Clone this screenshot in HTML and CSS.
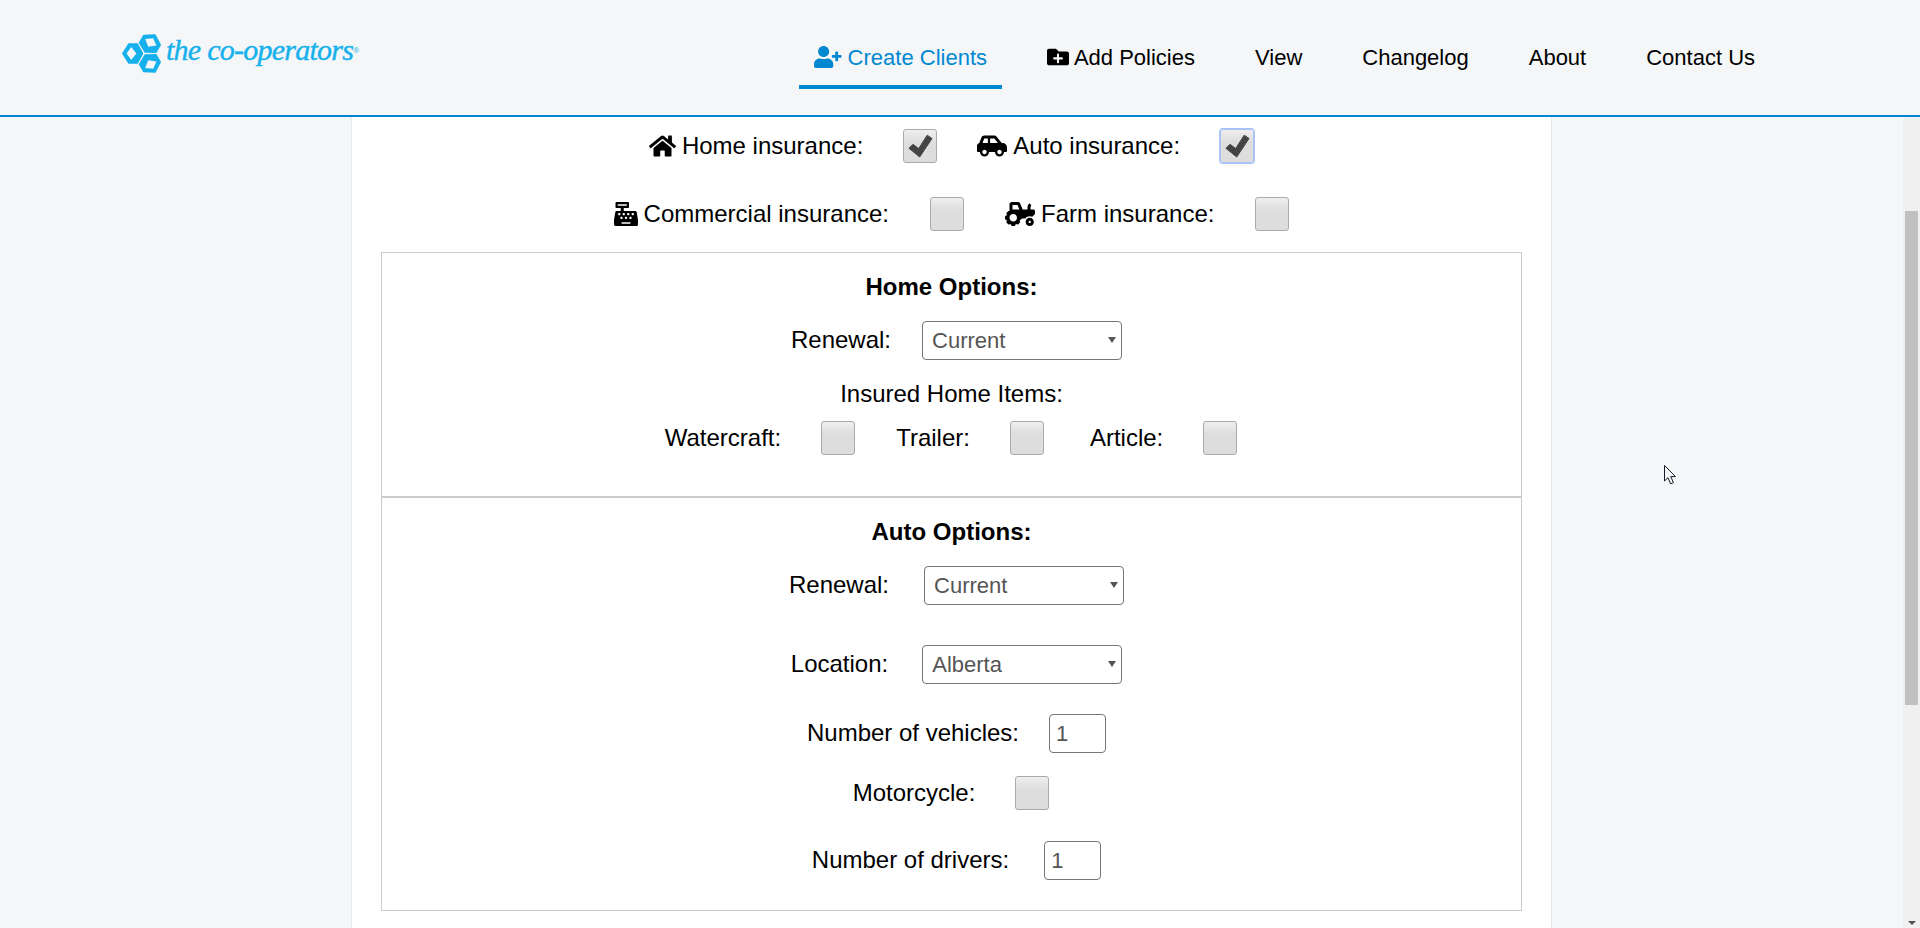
FILE: index.html
```html
<html>
    <head>
        <title>Create Clients</title>
        <meta name="viewport" content="width=device-width, initial-scale=1">
        <link rel="stylesheet" href="styles.css">
    </head>
    <body>
        <header class="topbar">
            <a class="logo" href="#">
                <svg class="logo-mark" viewBox="-25 -22 44 44">
                    <g>
                        <path class="lobe" d="M-24 0L-17 -11H-7L-1 0L-7 11H-17Z"/>
                        <path class="lobe-hole" d="M-19 0L-14 -7L-8.5 0L-14 7Z"/>
                    </g>
                    <g transform="rotate(120)">
                        <path class="lobe" d="M-24 0L-17 -11H-7L-1 0L-7 11H-17Z"/>
                        <path class="lobe-hole" d="M-19 0L-14 -7L-8.5 0L-14 7Z"/>
                    </g>
                    <g transform="rotate(240)">
                        <path class="lobe" d="M-24 0L-17 -11H-7L-1 0L-7 11H-17Z"/>
                        <path class="lobe-hole" d="M-19 0L-14 -7L-8.5 0L-14 7Z"/>
                    </g>
                </svg>
                <span class="logo-text">the co-operators</span><span class="logo-reg">®</span>
            </a>
            <nav class="nav">
                <a class="nav-link active" href="#">
                    <svg class="nav-icon" viewBox="0 0 640 512"><path d="M624 208h-64v-64c0-8.8-7.2-16-16-16h-32c-8.8 0-16 7.2-16 16v64h-64c-8.8 0-16 7.2-16 16v32c0 8.8 7.2 16 16 16h64v64c0 8.8 7.2 16 16 16h32c8.8 0 16-7.2 16-16v-64h64c8.8 0 16-7.2 16-16v-32c0-8.8-7.2-16-16-16zm-400 48c70.7 0 128-57.3 128-128S294.7 0 224 0 96 57.3 96 128s57.3 128 128 128zm89.6 32h-16.7c-22.2 10.2-46.9 16-72.9 16s-50.6-5.8-72.9-16h-16.7C60.2 288 0 348.2 0 422.4V464c0 26.5 21.5 48 48 48h352c26.5 0 48-21.5 48-48v-41.6c0-74.2-60.2-134.4-134.4-134.4z"/></svg>
                    Create Clients
                </a>
                <a class="nav-link" href="#">
                    <svg class="nav-icon" viewBox="0 0 512 512"><path d="M464 128H272l-64-64H48C21.49 64 0 85.49 0 112v288c0 26.51 21.49 48 48 48h416c26.51 0 48-21.49 48-48V176c0-26.51-21.49-48-48-48zm-96 168c0 8.84-7.16 16-16 16h-72v72c0 8.84-7.16 16-16 16h-16c-8.84 0-16-7.16-16-16v-72h-72c-8.84 0-16-7.16-16-16v-16c0-8.84 7.16-16 16-16h72v-72c0-8.84 7.16-16 16-16h16c8.84 0 16 7.16 16 16v72h72c8.84 0 16 7.16 16 16v16z"/></svg>
                    Add Policies
                </a>
                <a class="nav-link" href="#">View</a>
                <a class="nav-link" href="#">Changelog</a>
                <a class="nav-link" href="#">About</a>
                <a class="nav-link" href="#">Contact Us</a>
            </nav>
        </header>

        <main class="page">
            <div class="content">
                <div class="row types-row">
                    <span class="type-label">
                        <svg class="type-icon" viewBox="0 0 576 512"><path d="M280.37 148.26L96 300.11V464a16 16 0 0 0 16 16l112.06-.29a16 16 0 0 0 15.92-16V368a16 16 0 0 1 16-16h64a16 16 0 0 1 16 16v95.64a16 16 0 0 0 16 16.05L464 480a16 16 0 0 0 16-16V300L295.67 148.26a12.19 12.19 0 0 0-15.3 0zM571.6 251.47L488 182.56V44.05a12 12 0 0 0-12-12h-56a12 12 0 0 0-12 12v72.61L318.47 43a48 48 0 0 0-61 0L4.34 251.47a12 12 0 0 0-1.6 16.9l25.5 31A12 12 0 0 0 45.15 301l235.22-193.74a12.19 12.19 0 0 1 15.3 0L530.9 301a12 12 0 0 0 16.9-1.6l25.5-31a12 12 0 0 0-1.7-16.93z"/></svg>
                        Home insurance:
                    </span>
                    <span class="check">
                        <svg viewBox="0 0 25 24"><path d="M1 14.3L5 10.3L10.7 14.6L19.2 1.2L24 4.5L11.7 23Z"/></svg>
                    </span>
                    <span class="type-label">
                        <svg class="type-icon" viewBox="0 0 640 512"><path d="M544 192h-16L419.22 56.02A64.025 64.025 0 0 0 369.24 32H155.33c-26.17 0-49.7 15.93-59.42 40.23L48 194.26C20.44 201.4 0 226.21 0 256v112c0 8.84 7.16 16 16 16h48c0 53.02 42.98 96 96 96s96-42.98 96-96h128c0 53.02 42.98 96 96 96s96-42.98 96-96h48c8.84 0 16-7.16 16-16v-80c0-53.02-42.98-96-96-96zM160 432c-26.47 0-48-21.53-48-48s21.53-48 48-48 48 21.53 48 48-21.53 48-48 48zm72-240H116.93l38.4-96H232v96zm48 0V96h89.24l76.8 96H280zm200 240c-26.47 0-48-21.53-48-48s21.53-48 48-48 48 21.53 48 48-21.53 48-48 48z"/></svg>
                        Auto insurance:
                    </span>
                    <span class="check focused">
                        <svg viewBox="0 0 25 24"><path d="M1 14.3L5 10.3L10.7 14.6L19.2 1.2L24 4.5L11.7 23Z"/></svg>
                    </span>
                </div>
                <div class="row types-row second">
                    <span class="type-label">
                        <svg class="type-icon" viewBox="0 0 512 512"><path d="M511.1 378.8l-26.7-160c-2.6-15.4-15.9-26.7-31.6-26.7H208v-64h96c8.8 0 16-7.2 16-16V16c0-8.8-7.2-16-16-16H48c-8.8 0-16 7.2-16 16v96c0 8.8 7.2 16 16 16h96v64H59.1c-15.6 0-29 11.3-31.6 26.7L.8 378.7c-.6 3.5-.9 7-.9 10.5V480c0 17.7 14.3 32 32 32h448c17.7 0 32-14.3 32-32v-90.7c.1-3.5-.2-7-.8-10.5zM280 248c0-8.8 7.2-16 16-16h16c8.8 0 16 7.2 16 16v16c0 8.8-7.2 16-16 16h-16c-8.8 0-16-7.2-16-16v-16zm-32 64h16c8.8 0 16 7.2 16 16v16c0 8.8-7.2 16-16 16h-16c-8.8 0-16-7.2-16-16v-16c0-8.8 7.2-16 16-16zm-32-80c8.8 0 16 7.2 16 16v16c0 8.8-7.2 16-16 16h-16c-8.8 0-16-7.2-16-16v-16c0-8.8 7.2-16 16-16h16zM80 80V48h192v32H80zm40 200h-16c-8.8 0-16-7.2-16-16v-16c0-8.8 7.2-16 16-16h16c8.8 0 16 7.2 16 16v16c0 8.8-7.2 16-16 16zm16 64v-16c0-8.8 7.2-16 16-16h16c8.8 0 16 7.2 16 16v16c0 8.8-7.2 16-16 16h-16c-8.8 0-16-7.2-16-16zm216 112c0 4.4-3.6 8-8 8H168c-4.4 0-8-3.6-8-8v-16c0-4.4 3.6-8 8-8h176c4.4 0 8 3.6 8 8v16zm24-112c0 8.8-7.2 16-16 16h-16c-8.8 0-16-7.2-16-16v-16c0-8.8 7.2-16 16-16h16c8.8 0 16 7.2 16 16v16zm48-80c0 8.8-7.2 16-16 16h-16c-8.8 0-16-7.2-16-16v-16c0-8.8 7.2-16 16-16h16c8.8 0 16 7.2 16 16v16z"/></svg>
                        Commercial insurance:
                    </span>
                    <span class="check"></span>
                    <span class="type-label">
                        <svg class="type-icon" viewBox="0 0 640 512"><path d="M528 336c-48.6 0-88 39.4-88 88s39.4 88 88 88 88-39.4 88-88-39.4-88-88-88zm0 112c-13.23 0-24-10.77-24-24s10.77-24 24-24 24 10.77 24 24-10.77 24-24 24zm80-288h-64v-40.2c0-14.12 4.7-27.76 13.15-38.84 4.42-5.8 3.55-14.06-1.32-19.49L534.2 37.3c-6.66-7.45-18.32-6.92-24.7.78C490.58 60.9 480 89.81 480 119.8V160H377.67L321.58 29.14A47.914 47.914 0 0 0 277.45 0H144c-26.47 0-48 21.53-48 48v146.52c-8.63-6.73-20.96-6.46-28.89 1.47L36 227.1c-8.59 8.59-8.59 22.52 0 31.11l5.06 5.06c-4.99 9.26-8.96 18.82-11.91 28.72H22c-12.15 0-22 9.85-22 22v44c0 12.15 9.85 22 22 22h7.14c2.96 9.91 6.92 19.46 11.91 28.73l-5.06 5.06c-8.59 8.59-8.59 22.52 0 31.11L67.1 476c8.59 8.59 22.52 8.59 31.11 0l5.06-5.06c9.26 4.99 18.82 8.96 28.72 11.91V490c0 12.15 9.85 22 22 22h44c12.15 0 22-9.85 22-22v-7.14c9.9-2.95 19.46-6.92 28.72-11.91l5.06 5.06c8.59 8.59 22.52 8.59 31.11 0l31.11-31.11c8.59-8.59 8.59-22.52 0-31.11l-5.06-5.06c4.99-9.26 8.96-18.82 11.91-28.72H330c12.15 0 22-9.85 22-22v-6h80.54c21.91-28.99 56.32-48 95.46-48 18.64 0 36.07 4.61 51.8 12.2l50.82-50.82c6-6 9.37-14.14 9.37-22.63V192c.01-17.67-14.32-32-31.99-32zM176 416c-44.18 0-80-35.82-80-80s35.82-80 80-80 80 35.82 80 80-35.82 80-80 80zm22-256h-38V64h106.89l41.15 96H198z"/></svg>
                        Farm insurance:
                    </span>
                    <span class="check"></span>
                </div>

                <section class="options home-options">
                    <h4 class="options-title">Home Options:</h4>
                    <div class="row field-row first-field">
                        <label class="gap-31">Renewal:</label>
                        <span class="select-wrap"><select class="select"><option>Current</option></select></span>
                    </div>
                    <div class="items-title">Insured Home Items:</div>
                    <div class="row items-row">
                        <label class="gap-40">Watercraft:</label>
                        <span class="check"></span>
                        <label class="item-next gap-40">Trailer:</label>
                        <span class="check"></span>
                        <label class="item-last gap-40">Article:</label>
                        <span class="check"></span>
                    </div>
                </section>

                <section class="options auto-options">
                    <h4 class="options-title">Auto Options:</h4>
                    <div class="row field-row first-field">
                        <label class="gap-35">Renewal:</label>
                        <span class="select-wrap"><select class="select"><option>Current</option></select></span>
                    </div>
                    <div class="row field-row location-field">
                        <label class="gap-34">Location:</label>
                        <span class="select-wrap"><select class="select"><option>Alberta</option></select></span>
                    </div>
                    <div class="row field-row vehicles-field">
                        <label class="gap-30">Number of vehicles:</label>
                        <input class="number vehicles" type="number" value="1">
                    </div>
                    <div class="row motorcycle-field">
                        <label class="gap-40">Motorcycle:</label>
                        <span class="check"></span>
                    </div>
                    <div class="row field-row drivers-field">
                        <label class="gap-35">Number of drivers:</label>
                        <input class="number" type="number" value="1">
                    </div>
                </section>
            </div>
        </main>

        <!-- painted scrollbar and mouse pointer from the capture -->
        <div class="scrollbar">
            <div class="scroll-thumb"></div>
            <div class="scroll-arrow"></div>
        </div>
        <svg class="pointer" viewBox="0 0 12 20"><path d="M.5.5V16L4 12.7 6.6 18.8 9.4 17.6 6.8 11.6H11.5Z"/></svg>
    </body>
</html>
```

FILE: styles.css
```css
body {
    background: #f4f6f8;
    font-family: "Liberation Sans", Arial, sans-serif;
    margin: 0;
    padding: 0;
    height: 928px;
    overflow: hidden;
    color: #000;
    font-size: 24px;
}

.topbar {
    height: 115px;
    border-bottom: 2px solid #0288d1;
    display: flex;
    background: #f4f6f8;
}

.logo {
    display: flex;
    align-items: flex-start;
    width: 799px;
    padding: 32px 0 0 121px;
    box-sizing: border-box;
    text-decoration: none;
    color: #16b1ec;
}

.logo-mark {
    width: 41px;
    height: 43px;
    flex: none;
}

.lobe {
    fill: #16b1ec;
}

.lobe-hole {
    fill: #f4f6f8;
}

.logo-text {
    font-family: "Liberation Serif", "Times New Roman", serif;
    font-style: italic;
    font-size: 30px;
    line-height: 34px;
    margin: 1px 0 0 4px;
    letter-spacing: -0.75px;
    -webkit-text-stroke: 0.4px #16b1ec;
    white-space: nowrap;
}

.logo-reg {
    font-size: 8px;
    line-height: 10px;
    margin-top: 14px;
}

.nav {
    display: flex;
    gap: 30px;
    align-items: flex-start;
    padding-top: 25px;
}

.nav-link {
    display: block;
    padding: 17px 15px 11px;
    line-height: 32px;
    font-size: 22px;
    color: #000;
    text-decoration: none;
    border-bottom: 4px solid transparent;
    white-space: nowrap;
}

.nav-link.active {
    color: #0288d1;
    border-bottom-color: #0288d1;
}

.nav-icon {
    height: 22px;
    fill: currentColor;
    vertical-align: -3px;
}

.page {
    display: flex;
    justify-content: center;
    padding-right: 17px;
}

.content {
    width: 1201px;
    height: 811px;
    box-sizing: border-box;
    background: #fff;
    border-left: 1px solid #e6e8ea;
    border-right: 1px solid #e6e8ea;
    padding: 12px 29px 0;
}

.row {
    display: flex;
    justify-content: center;
    align-items: center;
}

.types-row {
    gap: 40px;
}

.types-row.second {
    gap: 41px;
    margin-top: 34px;
}

.type-label {
    display: flex;
    align-items: center;
    gap: 6px;
    line-height: 34px;
    white-space: nowrap;
}

.type-icon {
    height: 24px;
    fill: #000;
}

.check {
    width: 32px;
    height: 32px;
    flex: none;
    display: flex;
    align-items: center;
    justify-content: center;
    border: 1px solid #aaa;
    border-radius: 3px;
    background: linear-gradient(#efefef, #dddddd 40%);
}

.check svg {
    width: 25px;
    height: 24px;
    fill: #444;
    stroke: #444;
    stroke-width: 1;
    stroke-linejoin: round;
}

.check.focused {
    border-color: #a9c3f4;
    box-shadow: 0 0 0 1px #a9c3f4;
}

.options {
    border: 1px solid #ccc;
}

.home-options {
    margin-top: 21px;
    height: 245px;
    box-sizing: border-box;
}

.auto-options {
    height: 414px;
    box-sizing: border-box;
}

.options-title {
    margin: 19px 0 0;
    font-size: 24px;
    line-height: 30px;
    font-weight: bold;
    text-align: center;
}

.field-row {
    padding-left: 10px;
}

.field-row label {
    margin-bottom: 2px;
}

.first-field {
    margin-top: 19px;
}

.location-field {
    margin-top: 40px;
}

.vehicles-field {
    margin-top: 30px;
}

.motorcycle-field {
    margin-top: 23px;
    padding-right: 1px;
}

.drivers-field {
    margin-top: 31px;
}

.gap-30 { margin-right: 30px; }
.gap-31 { margin-right: 31px; }
.gap-34 { margin-right: 34px; }
.gap-35 { margin-right: 35px; }
.gap-40 { margin-right: 40px; }

.select-wrap {
    position: relative;
    display: block;
}

.select-wrap::after {
    content: "";
    position: absolute;
    top: 16px;
    right: 6px;
    border-top: 6px solid #555;
    border-left: 4px solid transparent;
    border-right: 4px solid transparent;
}

.select {
    display: block;
    appearance: none;
    width: 200px;
    height: 39px;
    padding: 0 0 0 9px;
    box-sizing: border-box;
    border: 1px solid #767676;
    border-radius: 4px;
    background: #fff;
    color: #555;
    font-family: "Liberation Sans", Arial, sans-serif;
    font-size: 22px;
}

.number {
    display: block;
    width: 57px;
    height: 39px;
    padding: 0 0 0 6px;
    box-sizing: border-box;
    border: 1px solid #767676;
    border-radius: 4px;
    background: #fff;
    color: #555;
    font-family: "Liberation Sans", Arial, sans-serif;
    font-size: 22px;
}

.items-title {
    margin-top: 19px;
    line-height: 30px;
    text-align: center;
}

.items-row {
    margin-top: 12px;
    padding-right: 1px;
}

.item-next {
    margin-left: 41px;
}

.item-last {
    margin-left: 46px;
}

.scrollbar {
    position: fixed;
    top: 117px;
    right: 0;
    bottom: 0;
    width: 17px;
    background: #f0f0f0;
}

.scroll-thumb {
    position: absolute;
    top: 94px;
    left: 2px;
    width: 13px;
    height: 494px;
    background: #c0c0c0;
}

.scroll-arrow {
    position: absolute;
    bottom: 3px;
    left: 5px;
    border-top: 4px solid #505050;
    border-left: 4px solid transparent;
    border-right: 4px solid transparent;
}

.pointer {
    position: fixed;
    top: 465px;
    left: 1664px;
    width: 12px;
    height: 20px;
    fill: #f4f6f8;
    stroke: #1a1a2a;
    stroke-width: 1;
}
```
